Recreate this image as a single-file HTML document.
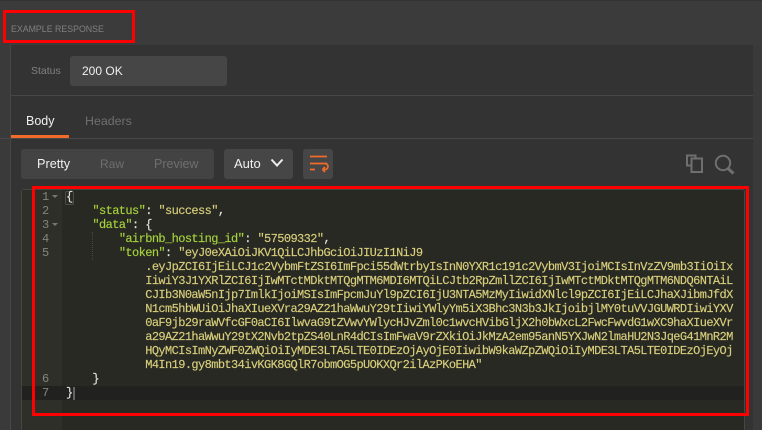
<!DOCTYPE html>
<html><head><meta charset="utf-8"><style>
html,body{margin:0;padding:0;background:#333}
#r{position:relative;width:762px;height:430px;overflow:hidden;background:#333;font-family:"Liberation Sans",sans-serif}
#r div{position:absolute;box-sizing:border-box}
.t{white-space:pre;line-height:16px}
.c{font-family:"Liberation Mono",monospace;font-size:12px;letter-spacing:-0.6px;line-height:14px;white-space:pre;color:#d9cf7c;left:66px;-webkit-text-stroke:0.15px currentColor}
.n{font-family:"Liberation Mono",monospace;font-size:12px;line-height:14px;color:#85857f;width:12px;left:42px}
.k{color:#a6d33c}.w{color:#e4e4de}
</style></head><body><div id="r">
<div style="left:0;top:0;width:10px;height:430px;background:#3a3a3a"></div>
<div style="left:10px;top:45px;width:1px;height:385px;background:#474747"></div>
<div style="left:753px;top:45px;width:9px;height:385px;background:#3a3a3a"></div>
<div style="left:0;top:0;width:762px;height:45px;background:#3b3b3b"></div>
<div style="left:0;top:0;width:762px;height:1px;background:#333"></div>
<div class="t" style="left:11px;top:21px;font-size:8.8px;color:#808080">EXAMPLE RESPONSE</div>

<div class="t" style="left:31px;top:63px;font-size:10.5px;color:#808080">Status</div>
<div style="left:70px;top:56px;width:157px;height:30px;background:#464646;border-radius:3px"></div>
<div class="t" style="left:82px;top:63px;font-size:12px;color:#f0f0f0">200 OK</div>
<div style="left:11px;top:95px;width:742px;height:1px;background:#474747"></div>

<div class="t" style="left:26px;top:113px;font-size:12.5px;color:#f0f0f0">Body</div>
<div class="t" style="left:85px;top:113px;font-size:12.4px;color:#6f6f6f">Headers</div>
<div style="left:11px;top:135px;width:58px;height:3px;background:#f26b2a"></div>
<div style="left:0;top:138px;width:753px;height:1px;background:#474747"></div>

<div style="left:21px;top:149px;width:193px;height:30px;background:#434343;border-radius:3px"></div>
<div class="t" style="left:37px;top:156px;font-size:12.7px;color:#f0f0f0">Pretty</div>
<div class="t" style="left:100px;top:156px;font-size:12px;color:#6f6f6f">Raw</div>
<div class="t" style="left:154px;top:156px;font-size:12.5px;color:#6f6f6f">Preview</div>
<div style="left:224px;top:149px;width:69px;height:30px;background:#464646;border-radius:3px"></div>
<div class="t" style="left:234px;top:156px;font-size:13px;color:#f0f0f0">Auto</div>
<svg style="position:absolute;left:270px;top:158px" width="14" height="10" viewBox="0 0 14 10"><path d="M1.5 1.5L7 7.5L12.5 1.5" fill="none" stroke="#eee" stroke-width="2"/></svg>
<div style="left:303px;top:149px;width:30px;height:30px;background:#464646;border-radius:3px"></div>
<svg style="position:absolute;left:303px;top:149px" width="30" height="30" viewBox="0 0 30 30"><path d="M7 7.5H24M7 14.500H24M7 20.500H12M20 20.500H22A2.800 2.800 0 0 0 22 14.500" fill="none" stroke="#f26b2a" stroke-width="1.700"/><path d="M19.500 20.500L22 18M19.500 20.500L22 23" fill="none" stroke="#f26b2a" stroke-width="1.700"/></svg>

<svg style="position:absolute;left:684px;top:153px" width="24" height="24" viewBox="0 0 24 24"><path d="M7 12.500H3V2.500H11.500V5" fill="none" stroke="#6f6f6f" stroke-width="2"/><rect x="7.500" y="5.500" width="10.500" height="13.500" fill="#333" stroke="#6f6f6f" stroke-width="2"/></svg>
<svg style="position:absolute;left:713px;top:153px" width="24" height="24" viewBox="0 0 24 24"><circle cx="10" cy="10" r="7.200" fill="none" stroke="#6f6f6f" stroke-width="2"/><path d="M15 15.500L20.500 20.500" stroke="#6f6f6f" stroke-width="3"/></svg>

<div style="left:21px;top:189px;width:724px;height:241px;background:#282923;border:1px solid #45463f;border-bottom:0;border-radius:3px 3px 0 0"></div>
<div style="left:22px;top:190px;width:40px;height:240px;background:#2e2f28"></div>
<div style="left:22px;top:386px;width:722px;height:14px;background:#212220"></div>
<div style="left:92px;top:232px;width:1px;height:28px;border-left:1px dotted #45463f"></div>
<div style="left:65px;top:191px;width:9px;height:14px;border:1px solid #4c4d47;border-radius:2px"></div>
<div style="left:73px;top:387px;width:2px;height:13px;background:#65665f"></div>

<div class="n" style="top:190px">1</div>
<div class="n" style="top:204px">2</div>
<div class="n" style="top:218px">3</div>
<div class="n" style="top:232px">4</div>
<div class="n" style="top:246px">5</div>
<div class="n" style="top:372px">6</div>
<div class="n" style="top:386px">7</div>
<svg style="position:absolute;left:52px;top:195px" width="7" height="34" viewBox="0 0 7 34"><path d="M0 0H6L3 3ZM0 28H6L3 31Z" fill="#77776f"/></svg>

<div class="c w" style="top:190px">{</div>
<div class="c" style="top:204px"><span class="w">    </span><span class="k">"status"</span><span class="w">: </span>"success"<span class="w">,</span></div>
<div class="c" style="top:218px"><span class="w">    </span><span class="k">"data"</span><span class="w">: {</span></div>
<div class="c" style="top:232px">        <span class="k">"airbnb_hosting_id"</span><span class="w">: </span>"57509332"<span class="w">,</span></div>
<div class="c" style="top:246px">        <span class="k">"token"</span><span class="w">: </span>"eyJ0eXAiOiJKV1QiLCJhbGciOiJIUzI1NiJ9</div>
<div class="c" style="top:260px">            .eyJpZCI6IjEiLCJ1c2VybmFtZSI6ImFpci55dWtrbyIsInN0YXR1c191c2VybmV3IjoiMCIsInVzZV9mb3IiOiIx</div>
<div class="c" style="top:274px">            IiwiY3J1YXRlZCI6IjIwMTctMDktMTQgMTM6MDI6MTQiLCJtb2RpZmllZCI6IjIwMTctMDktMTQgMTM6NDQ6NTAiL</div>
<div class="c" style="top:288px">            CJIb3N0aW5nIjp7ImlkIjoiMSIsImFpcmJuYl9pZCI6IjU3NTA5MzMyIiwidXNlcl9pZCI6IjEiLCJhaXJibmJfdX</div>
<div class="c" style="top:302px">            N1cm5hbWUiOiJhaXIueXVra29AZ21haWwuY29tIiwiYWlyYm5iX3Bhc3N3b3JkIjoibjlMY0tuVVJGUWRDIiwiYXV</div>
<div class="c" style="top:316px">            0aF9jb29raWVfcGF0aCI6IlwvaG9tZVwvYWlycHJvZml0c1wvcHVibGljX2h0bWxcL2FwcFwvdG1wXC9haXIueXVr</div>
<div class="c" style="top:330px">            a29AZ21haWwuY29tX2Nvb2tpZS40LnR4dCIsImFwaV9rZXkiOiJkMzA2em95anN5YXJwN2lmaHU2N3JqeG41MnR2M</div>
<div class="c" style="top:344px">            HQyMCIsImNyZWF0ZWQiOiIyMDE3LTA5LTE0IDEzOjAyOjE0IiwibW9kaWZpZWQiOiIyMDE3LTA5LTE0IDEzOjEyOj</div>
<div class="c" style="top:358px">            M4In19.gy8mbt34ivKGK8GQlR7obmOG5pUOKXQr2ilAzPKoEHA"</div>
<div class="c w" style="top:372px">    }</div>
<div class="c w" style="top:386px">}</div>

<div style="left:3px;top:10px;width:132px;height:33px;border:3px solid #f00"></div>
<div style="left:32px;top:186px;width:717px;height:230px;border:3px solid #f00"></div>
</div></body></html>
